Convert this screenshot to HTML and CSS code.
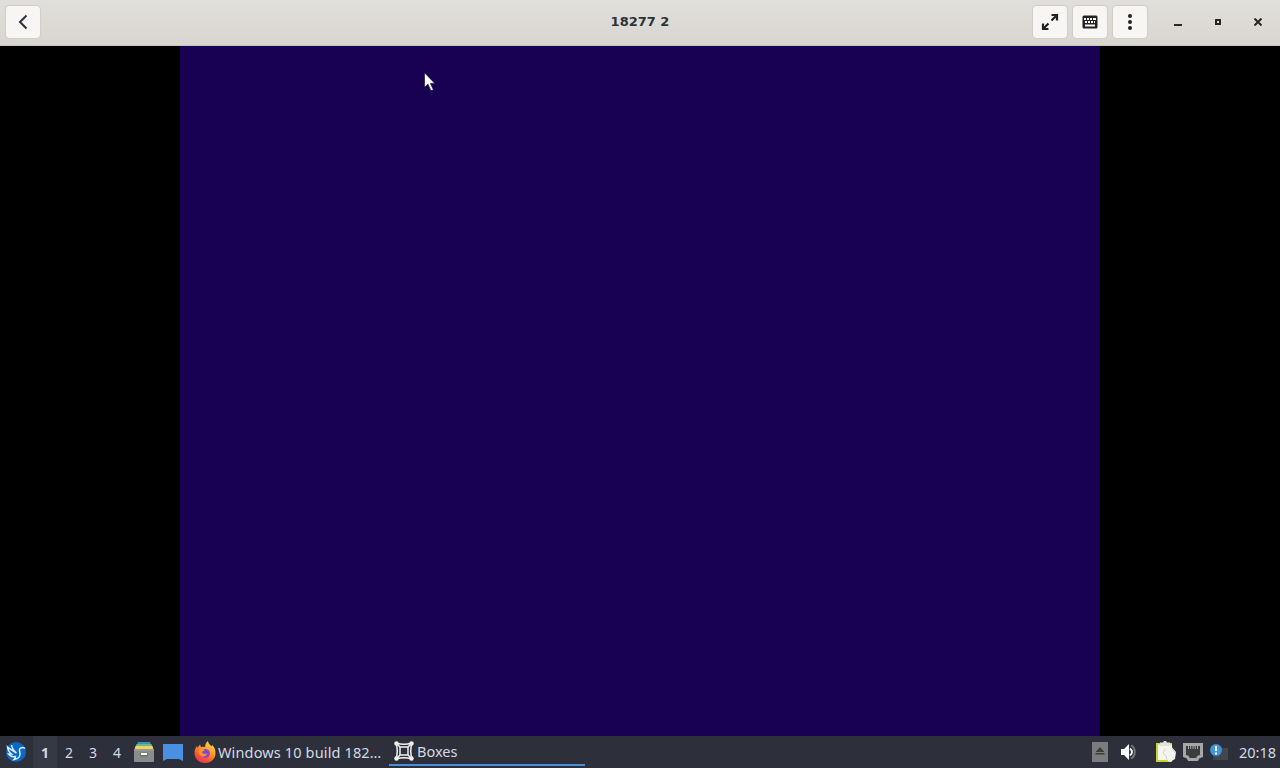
FILE: index.html
```
<!DOCTYPE html>
<html lang="en">
<head>
    <meta charset="UTF-8">
    <title>18277 2</title>
    <link rel="stylesheet" href="styles.css">
</head>
<body>

    <header class="titlebar">
        <div class="side">
            <button class="btn" aria-label="Back">
                <svg width="16" height="16" viewBox="0 0 16 16"><path d="M11.500 1.500 5 8l6.500 6.500" fill="none" stroke="#2e3436" stroke-width="2"/></svg>
            </button>
        </div>
        <h1>18277 2</h1>
        <div class="side right">
            <button class="btn" aria-label="Fullscreen">
                <svg width="18" height="18" viewBox="0 0 18 18">
                    <path d="M10.500 2h5.500v5.500M7.500 16H2v-5.500M16 2l-5.500 5.500M2 16l5.500-5.500" fill="none" stroke="#222" stroke-width="2.200"/>
                </svg>
            </button>
            <button class="btn" aria-label="Keyboard">
                <svg width="16" height="14" viewBox="0 0 16 14">
                    <rect x=".5" y=".5" width="15" height="13" rx="1.500" fill="#222"/>
                    <path d="M2 4h2m1 0h2m1 0h2m1 0h3M3 7h2m1 0h2m1 0h2m1 0h1" stroke="#f8f7f6" stroke-width="2"/>
                    <path d="M3 10.500h10" stroke="#f8f7f6" stroke-width="2"/>
                </svg>
            </button>
            <button class="btn" aria-label="Menu">
                <svg width="4" height="16" viewBox="0 0 4 16" fill="#222"><circle cx="2" cy="2" r="2"/><circle cx="2" cy="8" r="2"/><circle cx="2" cy="14" r="2"/></svg>
            </button>
            <div class="window-controls">
                <svg viewBox="0 0 8 8"><path d="M0 7h8" stroke="#2c2723" stroke-width="2"/></svg>
                <svg viewBox="0 0 8 8"><path d="M2 2h4v4H2z" fill="none" stroke="#2c2723" stroke-width="2"/></svg>
                <svg viewBox="0 0 8 8"><path d="m.5.5 7 7m0-7-7 7" stroke="#2c2723" stroke-width="2"/></svg>
            </div>
        </div>
    </header>

    <main class="display">
        <div class="guest">
            <svg class="cursor" width="12" height="20" viewBox="0 0 12 20"><path d="M.5.8v14.500l3.400-3.100 3.100 6.600 2.400-1.100-3-6.300h4.400z" fill="#fff" stroke="#0b0030" stroke-width=".6"/></svg>
        </div>
    </main>

    <footer class="taskbar">
        <svg class="start" width="20" height="20" viewBox="0 0 20 20">
            <circle cx="10" cy="10" r="10" fill="#0b68c4"/>
            <path d="M19 6.500c-2-1.500-5-1-5.500 1-.5 1.500.8 2.500.5 5-.3 2.500-2.500 4.500-6 5 1-1 1.500-2 1.500-3-3 .5-5.500-.5-7-2.500h3C3.500 10.500 1.800 8 1.500 5c2.500 2.500 6 3.500 8.500 6M5.500 3C6 6.500 8 9 10.500 11" fill="none" stroke="#d9ecff" stroke-width="1.500"/>
        </svg>
        <nav class="desks">
            <span class="active">1</span><span>2</span><span>3</span><span>4</span>
        </nav>
        <svg class="files" width="20" height="20" viewBox="0 0 20 20">
            <path d="M4 0h12l1 3H3z" fill="#3f8fbd"/>
            <path d="M2.500 2h15l1 3h-17z" fill="#66b889"/>
            <path d="M1.500 4h17l1 4H.5z" fill="#eed65c"/>
            <rect y="7" width="20" height="13" rx="1" fill="#8b8d8b"/>
            <path d="M0 8h20" stroke="#a2a39f"/>
            <rect x="6" y="10.500" width="8" height="4" rx="1.500" fill="#6f716f"/>
            <path d="M7 12h6" stroke="#fff" stroke-width="2"/>
        </svg>
        <svg class="desktop" width="20" height="17" viewBox="0 0 20 17"><path d="M0 0h20v17l-4-2H4l-4 2z" fill="#4a90e2"/></svg>
        <div class="task firefox">
            <svg width="22" height="22" viewBox="0 0 22 22">
                <defs>
                    <linearGradient id="flame" x1=".8" y1="0" x2=".2" y2="1"><stop offset="0" stop-color="#ffe34a"/><stop offset=".4" stop-color="#ff9a27"/><stop offset=".75" stop-color="#ff5030"/><stop offset="1" stop-color="#e92b65"/></linearGradient>
                </defs>
                <path d="M11 22C4.500 22 .5 17.500.5 12c0-3 1-5.500 2.700-7l.3 2L6 3.500l1 2.700c1.500-.5 3-.4 4.200 0C11 3.500 12 1.500 14 0c.2 2.500 2 3.700 3.500 5.300l.8-1.300c2.300 2.500 3.200 5 3.200 8 0 5.500-4 10-10.500 10z" fill="url(#flame)"/>
                <circle cx="11.300" cy="12.500" r="4.500" fill="#8049d2"/>
                <path d="M5 8.500c2-1.500 4-.8 6 1-2 .2-2.500 1-3 2 1 2 4 1.500 5.500.8-1 3-4.500 4.200-7 2.200C4.500 13 4 10.500 5 8.500z" fill="#ff9528"/>
            </svg>
            <span>Windows 10 build 182…</span>
        </div>
        <div class="task boxes">
            <svg width="20" height="20" viewBox="0 0 20 20" fill="none" stroke="#f2f2ee">
                <path d="M2 2q8 2.500 16 0-2.500 8 0 16-8-2.500-16 0 2.500-8 0-16z" stroke-width="1.500"/>
                <path d="M6 6h8v8H6zM2 2l4 4m12-4-4 4m4 12-4-4M2 18l4-4" stroke-width="1.500"/>
                <g fill="#f2f2ee" stroke="none"><circle cx="2.500" cy="2.500" r="2.200"/><circle cx="17.500" cy="2.500" r="2.200"/><circle cx="2.500" cy="17.500" r="2.200"/><circle cx="17.500" cy="17.500" r="2.200"/></g>
            </svg>
            <span>Boxes</span>
        </div>
        <div class="tray">
            <svg width="16" height="20" viewBox="0 0 16 20"><path d="M0 0h16v20H0z" fill="#7c7c7c"/><path d="m8 5 4.500 5h-9zM3.500 11h9v1.500h-9z" fill="#3d3d3d"/></svg>
            <svg class="volume" width="17" height="16" viewBox="0 0 17 16">
                <path d="M0 5h3l5-5v16l-5-5H0z" fill="#fff"/>
                <path d="M9 4.500q4 3.500 0 7" fill="none" stroke="#fff" stroke-width="1.800"/>
                <path d="M10 1.500c5 2 5 11 0 13" fill="none" stroke="#777a80" stroke-width="1.800"/>
            </svg>
            <svg class="clipboard" width="20" height="22" viewBox="0 0 20 22">
                <path d="M0 2h16v19H0z" fill="#c5d534"/>
                <path d="M2 3.500h14V19H2z" fill="#f6f6ed"/>
                <path d="M4 1.500h3L8 0h2l1 1.500h3V5H4z" fill="#e3e4dc"/>
                <path d="m9 8 6-3 5 6-1 7-5 3-3-2-1-4-3-3z" fill="#f5f5ef"/>
                <path d="m9 8-2 4 3 3 1 4M16 7l3 5" fill="none" stroke="#c0c1b6" stroke-width=".7"/>
            </svg>
            <svg class="network" width="20" height="18" viewBox="0 0 20 18">
                <path d="M1.500 1.500h17v11.500l-3 1-1.500 2.500H6L4.500 14l-3-1z" fill="#3b3c3e" stroke="#a6a6a4" stroke-width="3"/>
                <path d="M5.500 3v3m2.200-3v3M10 3v3m2.200-3v3m2.300-3v3" stroke="#aaa"/>
            </svg>
            <svg class="notice" width="19" height="17" viewBox="0 0 19 17">
                <path d="M4 4h14v12H3z" fill="#41474c"/>
                <circle cx="6" cy="6" r="6" fill="#4094d8"/>
                <path d="M6 2v5M6 8.500v2" stroke="#fff" stroke-width="2"/>
            </svg>
            <time>20:18</time>
        </div>
    </footer>

</body>
</html>
```
FILE: styles.css
```
body {
    display: flex;
    flex-direction: column;
    height: 100vh;
    margin: 0;
    overflow: hidden;
    background: #000;
    font-family: "Noto Sans", sans-serif;
}

svg {
    display: block;
    flex: none;
}

.titlebar {
    display: flex;
    align-items: center;
    box-sizing: border-box;
    height: 46px;
    padding: 0 6px 2px;
    background: linear-gradient(#e1dfdb, #d9d6d2);
    border-bottom: 1px solid #c9c5be;
}

.titlebar h1 {
    margin: 0;
    color: #2e3436;
    font: bold 13px "DejaVu Sans", sans-serif;
}

.side {
    display: flex;
    flex: 1;
    align-items: center;
}

.right {
    justify-content: flex-end;
    gap: 6px;
}

.btn {
    display: flex;
    align-items: center;
    justify-content: center;
    box-sizing: border-box;
    width: 34px;
    height: 32px;
    padding: 0;
    background: #f7f6f5;
    border: 0;
    border-radius: 4px;
    box-shadow: 0 0 1px 1px #d0ccc7;
}

.window-controls {
    display: flex;
    gap: 32px;
    margin: 0 12px 0 21px;
}

.window-controls svg {
    width: 8px;
    height: 8px;
}

.display {
    display: flex;
    flex: 1;
    justify-content: center;
    background: #000;
}

.guest {
    position: relative;
    width: 920px;
    background: #180052;
}

.cursor {
    position: absolute;
    left: 244px;
    top: 26px;
}

.taskbar {
    display: flex;
    align-items: center;
    box-sizing: border-box;
    height: 32px;
    padding: 0 4px 0 6px;
    background: #2d303b;
    color: #d3dae3;
    font-size: 14.5px;
    white-space: nowrap;
}

.desks {
    display: flex;
    margin-left: 7px;
    font-size: 14px;
}

.desks span {
    box-sizing: border-box;
    width: 24px;
    height: 32px;
    padding-top: 1px;
    line-height: 32px;
    text-align: center;
}

.desks .active {
    background: #353944;
    font-weight: bold;
}

.files {
    margin-left: 5px;
}

.desktop {
    margin: 1px 0 0 9px;
}

.task {
    display: flex;
    align-items: center;
    box-sizing: border-box;
    height: 32px;
}

.firefox {
    width: 195px;
    gap: 2px;
    margin-left: 11px;
    letter-spacing: 0.14px;
}

.boxes {
    width: 196px;
    height: 30px;
    gap: 3px;
    margin-bottom: 2px;
    padding: 2px 0 0 5px;
    border-bottom: 2px solid #4a90d9;
}

.tray {
    display: flex;
    align-items: center;
    margin-left: auto;
}

.volume {
    margin-left: 13px;
}

.clipboard {
    margin-left: 18px;
}

.network {
    margin-left: 7px;
}

.notice {
    margin-left: 7px;
}

.tray time {
    width: 38px;
    margin-left: 9px;
    text-align: right;
}
```
